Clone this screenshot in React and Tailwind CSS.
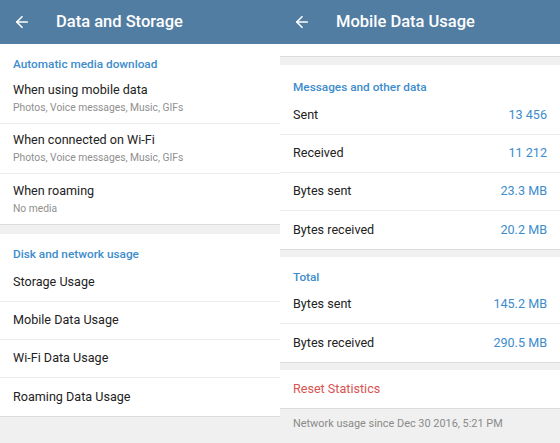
import {ArrowLeft} from "lucide-react";

const font = {fontFamily: "Roboto, 'Noto Sans', sans-serif"};

const Header = ({title}) => (
    <div className="h-[44px] bg-[#527da3] flex items-center px-[13px] shrink-0">
        <ArrowLeft size={18} strokeWidth={2.2} className="text-white"/>
        <div className="ml-[25px] text-white text-[16.5px] font-medium">{title}</div>
    </div>
)

const SectionTitle = ({children, className = ""}) => (
    <div className={"px-[13px] text-[11.8px] leading-[16px] font-medium text-[#3d8ccc] " + className}>{children}</div>
)

const TwoLine = ({title, sub, last}) => (
    <div className={"h-[50px] px-[13px] flex flex-col justify-center " + (last ? "" : "border-b border-[#ececec]")}>
        <div className="text-[12.6px] text-[#222] leading-[18px]">{title}</div>
        <div className="text-[10.3px] text-[#8f8f8f] leading-[16px] mt-[1px]">{sub}</div>
    </div>
)

const Row = ({title, value, last}) => (
    <div className={"h-[38px] px-[13px] flex items-center justify-between " + (last ? "" : "border-b border-[#ececec]")}>
        <span className="text-[12.6px] text-[#222]">{title}</span>
        {value && <span className="text-[12.6px] text-[#3d8ccc]">{value}</span>}
    </div>
)

const Gap = ({h = "h-[10px]"}) => (
    <div className={h + " bg-[#f0f0f0] border-t border-[#dcdcdc] shrink-0"}/>
)

const LeftPanel = () => (
    <div className="w-[280px] h-[443px] flex flex-col bg-[#f0f0f0]">
        <Header title="Data and Storage"/>
        <div className="bg-white">
            <SectionTitle className="pt-[12px] pb-[2px]">Automatic media download</SectionTitle>
            <TwoLine title="When using mobile data" sub="Photos, Voice messages, Music, GIFs"/>
            <TwoLine title="When connected on Wi-Fi" sub="Photos, Voice messages, Music, GIFs"/>
            <TwoLine title="When roaming" sub="No media" last/>
        </div>
        <Gap/>
        <div className="bg-white">
            <SectionTitle className="pt-[12px] pb-[2px]">Disk and network usage</SectionTitle>
            <Row title="Storage Usage"/>
            <Row title="Mobile Data Usage"/>
            <Row title="Wi-Fi Data Usage"/>
            <Row title="Roaming Data Usage" last/>
        </div>
        <div className="border-t border-[#dcdcdc] flex-1"/>
    </div>
)

const RightPanel = () => (
    <div className="w-[280px] h-[443px] flex flex-col bg-[#f0f0f0]">
        <Header title="Mobile Data Usage"/>
        <div className="h-[12px] bg-white shrink-0"/>
        <Gap h="h-[9px]"/>
        <div className="bg-white">
            <SectionTitle className="pt-[14px] pb-[2px]">Messages and other data</SectionTitle>
            <Row title="Sent" value="13 456"/>
            <Row title="Received" value="11 212"/>
            <Row title="Bytes sent" value="23.3 MB"/>
            <Row title="Bytes received" value="20.2 MB" last/>
        </div>
        <Gap h="h-[8px]"/>
        <div className="bg-white">
            <SectionTitle className="pt-[12px] pb-[1px]">Total</SectionTitle>
            <Row title="Bytes sent" value="145.2 MB"/>
            <Row title="Bytes received" value="290.5 MB" last/>
        </div>
        <Gap h="h-[8px]"/>
        <div className="bg-white h-[38px] px-[13px] flex items-center shrink-0">
            <span className="text-[12.6px] text-[#d9534f]">Reset Statistics</span>
        </div>
        <div className="border-t border-[#dcdcdc] flex-1 px-[13px] pt-[7px]">
            <div className="text-[10.9px] leading-[16px] text-[#8a8a8a]">Network usage since Dec 30 2016, 5:21 PM</div>
        </div>
    </div>
)

export default function App() {
    return (
        <div className="w-[560px] h-[443px] flex overflow-hidden bg-white" style={font}>
            <LeftPanel/>
            <RightPanel/>
        </div>
    )
}
